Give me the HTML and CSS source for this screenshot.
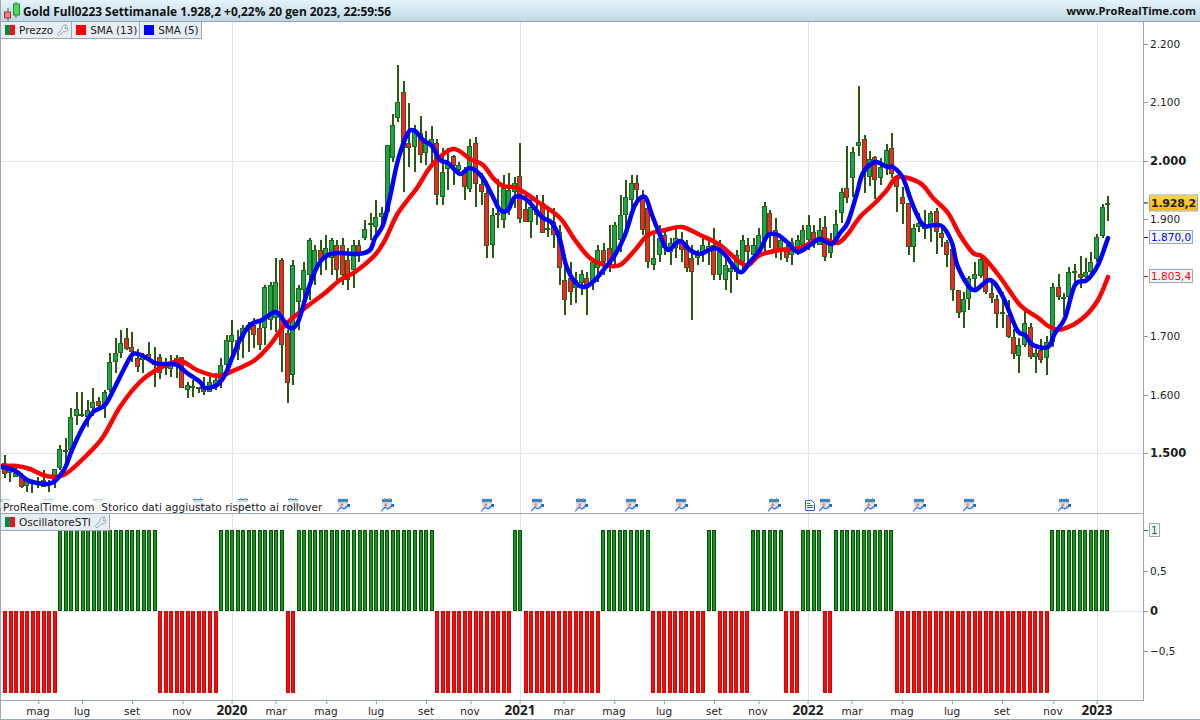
FILE: index.html
```html
<!DOCTYPE html>
<html lang="it">
<head>
  <meta charset="UTF-8" />
  <title>Gold Full0223 Settimanale</title>
  <link rel="stylesheet" href="styles.css">
</head>
<body>
  <svg class="defs" width="0" height="0">
    <symbol id="wrench" viewBox="0 0 16 16">
      <path d="M1.5 12.5 L7.5 7 C6.5 3.5 9.5 0.5 13.5 1.5 L10.8 4.2 L11.8 6.2 L14.2 4.4 C15.2 8 12 10.4 9 9.2 L3.6 14.6 Z" fill="#fff" stroke="#6f93b5" stroke-width="1.1" stroke-linejoin="round"/>
    </symbol>
    <symbol id="cal" viewBox="0 0 13 14">
      <rect x="1" y="2" width="10" height="9" fill="#cdd2d8"/>
      <path d="M3 5v6M5.5 5v6M8 5v6M1 7h10M1 9.5h10" stroke="#f2f3f5" stroke-width="0.8"/>
      <rect x="1" y="1" width="10" height="3" fill="#3f86b4"/>
      <rect x="3" y="0" width="1" height="2" fill="#8c98a4"/>
      <rect x="8" y="0" width="1" height="2" fill="#8c98a4"/>
      <rect x="3.5" y="5.5" width="2.5" height="2.5" fill="#ee7f7f"/>
      <polyline points="0,13.5 4,9 7,11 11,7.5" fill="none" stroke="#2f6fdc" stroke-width="1.1"/>
      <rect x="10.2" y="6" width="2.8" height="2.8" fill="#1c5fd4"/>
    </symbol>
    <symbol id="doc" viewBox="0 0 10 11">
      <path d="M0.5 0.5h6l3 3v7h-9z" fill="#fff" stroke="#2f66d0"/>
      <path d="M2 3.5h3M2 5.5h6M2 7.5h6" stroke="#2f66d0"/>
    </symbol>
  </svg>

  <div class="window">
    <header class="titlebar">
      <svg class="logo" width="18" height="20" viewBox="0 0 18 20">
        <path d="M5 7v13M13 1v16" stroke="#1f7a2a" stroke-width="1"/>
        <rect x="1.5" y="11" width="6" height="6" fill="#f08080" stroke="#a83030"/>
        <rect x="10.5" y="3" width="6" height="11" fill="#4fd860" stroke="#1f8a2a"/>
      </svg>
      <span class="title">Gold Full0223 Settimanale 1.928,2 +0,22% 20 gen 2023, 22:59:56</span>
      <span class="site">www.ProRealTime.com</span>
    </header>

    <section class="row row-price">
      <div class="plot" id="pricePlot">
        <svg class="chart" id="priceChart" viewBox="1 22 1142 491" preserveAspectRatio="none"></svg>
        <div class="legend">
          <div class="tab"><i class="swatch swatch-split"></i>Prezzo<svg class="tool"><use href="#wrench"/></svg></div>
          <div class="tab tab-sma"><i class="swatch swatch-red"></i>SMA (13)</div>
          <div class="tab tab-sma"><i class="swatch swatch-blue"></i>SMA (5)</div>
        </div>
        <div class="note">ProRealTime.com&nbsp; Storico dati aggiustato rispetto ai rollover</div>
      </div>
      <div class="yaxis" id="priceAxis"></div>
    </section>

    <section class="row row-osc">
      <div class="plot" id="oscPlot">
        <svg class="chart" id="oscChart" viewBox="1 514 1142 186" preserveAspectRatio="none"></svg>
        <div class="legend">
          <div class="tab"><i class="swatch swatch-split"></i>OscillatoreSTI<svg class="tool"><use href="#wrench"/></svg></div>
        </div>
      </div>
      <div class="yaxis" id="oscAxis"></div>
    </section>

    <footer class="xaxis" id="timeAxis"></footer>
  </div>

  <script src="script.js"></script>
</body>
</html>
```

FILE: styles.css
```css
* {
  box-sizing: border-box;
}

body {
  margin: 0;
  width: 1200px;
  height: 720px;
  overflow: hidden;
  background: #fff;
  color: #1c1c1c;
  font-family: "DejaVu Sans", sans-serif;
  font-size: 10.5px;
}

.defs {
  position: absolute;
}

.window {
  display: flex;
  flex-direction: column;
  height: 720px;
  border-left: 1px solid #9aa8b2;
}

.titlebar {
  display: flex;
  align-items: center;
  height: 22px;
  padding: 0 4px 0 2px;
  background: linear-gradient(#e6f3f9, #bfd8e5);
  border-bottom: 1px solid #94a4ae;
  font-family: "Open Sans", sans-serif;
  font-size: 11.9px;
  font-weight: bold;
}

.logo {
  margin-right: 2px;
}

.title {
  flex: 1;
  color: #111;
}

.site {
  color: #111;
  font-size: 11.2px;
}

.row {
  display: flex;
}

.row-price {
  height: 492px;
}

.row-osc {
  height: 187px;
}

.plot {
  position: relative;
  width: 1142px;
  border-bottom: 1px solid #9aa8b2;
}

.chart {
  display: block;
  width: 100%;
  height: 100%;
}

.legend {
  position: absolute;
  top: 0;
  left: 0;
  display: flex;
}

.tab {
  display: flex;
  align-items: center;
  height: 17px;
  padding: 0 2px 0 4px;
  background: #e7eef3;
  border-right: 1px solid #9aa8b2;
  border-bottom: 1px solid #9aa8b2;
  white-space: nowrap;
}

.tab-sma {
  letter-spacing: -0.1px;
}

.swatch {
  width: 10px;
  height: 10px;
  margin-right: 4px;
}

.swatch-split {
  background: linear-gradient(90deg, #0b8a3c 50%, #e8141c 50%);
}

.swatch-red {
  background: #f00;
}

.swatch-blue {
  background: #00f;
}

.tool {
  width: 13px;
  height: 13px;
  margin-left: 3px;
}

.note {
  position: absolute;
  left: 2px;
  right: 819px;
  bottom: 0;
  height: 13px;
  line-height: 15px;
  background: rgba(255, 255, 255, 0.72);
  white-space: nowrap;
  letter-spacing: 0.05px;
}

.mark {
  position: absolute;
  top: 476px;
  width: 13px;
  height: 14px;
}

.mark-doc {
  top: 478px;
  width: 10px;
  height: 11px;
}

.mark-faded {
  opacity: 0.35;
}

.yaxis {
  position: relative;
  flex: 1;
  border-left: 1px solid #9aa8b2;
}

.ylabel {
  position: absolute;
  left: 0;
  display: flex;
  align-items: center;
  transform: translateY(-50%);
  white-space: nowrap;
}

.ylabel::before {
  content: "";
  width: 4px;
  height: 1px;
  margin-right: 1px;
  background: #8a98a2;
}

.ylabel-main {
  font-weight: bold;
  font-size: 11.5px;
}

.ylabel span {
  padding: 0 1px;
}

.ylabel-tag span {
  padding: 0 1px;
  border: 1px solid #9aa8b2;
  background: #f1f4f8;
  line-height: 12px;
}

.ylabel-gold {
  font-weight: bold;
  font-size: 11px;
  letter-spacing: -0.25px;
}

.ylabel-gold::before {
  background: #111;
}

.ylabel-gold span {
  background: linear-gradient(#ffd740, #f7b90a);
  line-height: 15px;
}

.ylabel-blue {
  color: #00f;
}

.ylabel-blue::before {
  background: #00f;
}

.ylabel-red {
  color: #f00;
}

.ylabel-red::before {
  background: #f00;
}

.ylabel-green {
  color: #0a7a0a;
}

.ylabel-green::before {
  background: #0a7a0a;
}

.xaxis {
  position: relative;
  height: 19px;
  border-bottom: 1px solid #9aa8b2;
}

.xlabel {
  position: absolute;
  top: 0;
  padding-top: 4px;
  transform: translateX(-50%);
  line-height: 13px;
}

.xlabel::before {
  content: "";
  position: absolute;
  top: 0;
  left: 50%;
  width: 1px;
  height: 3px;
  background: #8a98a2;
}

.xlabel-year {
  padding-top: 3px;
  font-family: "Open Sans", sans-serif;
  font-weight: bold;
  font-size: 13.5px;
}
```

FILE: script.js
```js
// all chart data is in page pixels, the svg viewBox maps them straight
const NS = "http://www.w3.org/2000/svg";
const GREEN = 0, RED = 1;

// x, high, low, body top, body bottom, colour
const candles = [
  [5,455,478,463,474,RED],[10,466,482,467,473,GREEN],[16,468,477,473,477,GREEN],[22,473,488,477,487,RED],
  [27,478,492,480,486,GREEN],[32,480,493,482,484,GREEN],[38,477,488,482,484,GREEN],[44,470,487,480,487,RED],
  [49,480,492,482,485,GREEN],[55,469,488,469,482,GREEN],[60,445,470,449,468,GREEN],[66,438,463,450,452,GREEN],
  [71,408,455,417,450,GREEN],[77,392,425,409,416,GREEN],[82,392,417,414,416,GREEN],[88,400,427,410,417,GREEN],
  [93,388,416,402,408,GREEN],[99,397,410,401,406,RED],[105,390,418,392,406,GREEN],[110,353,392,362,390,GREEN],
  [116,338,373,353,362,GREEN],[121,330,358,343,353,GREEN],[127,328,350,338,349,RED],[132,332,362,347,352,RED],
  [138,349,372,358,367,RED],[143,353,373,357,360,GREEN],[149,342,361,354,358,RED],[155,347,387,363,365,GREEN],
  [160,354,379,357,373,RED],[166,358,375,364,368,GREEN],[171,355,377,363,369,GREEN],[177,355,378,358,366,GREEN],
  [182,357,388,357,388,RED],[188,382,398,385,390,GREEN],[193,380,397,386,388,RED],[199,387,393,387,389,GREEN],
  [204,377,395,387,392,RED],[210,377,392,382,392,GREEN],[216,373,390,380,385,GREEN],[221,358,388,365,382,GREEN],
  [227,335,375,340,365,GREEN],[232,320,360,335,342,GREEN],[238,330,360,340,350,RED],[243,325,358,328,338,GREEN],
  [249,322,352,325,330,GREEN],[254,318,348,325,335,RED],[260,322,350,328,345,RED],[265,285,345,287,328,GREEN],
  [271,282,330,285,320,GREEN],[276,258,332,282,318,GREEN],[282,258,372,260,345,RED],[288,330,403,333,383,RED],
  [293,260,385,265,375,GREEN],[299,285,330,288,302,GREEN],[304,262,310,270,290,GREEN],[310,238,300,240,275,GREEN],
  [315,245,285,250,272,GREEN],[321,240,275,250,260,RED],[326,235,270,248,258,GREEN],[332,238,275,240,258,GREEN],
  [337,240,280,245,270,RED],[343,238,285,245,275,RED],[348,248,290,260,280,RED],[354,240,288,245,270,GREEN],
  [359,240,262,245,255,RED],[365,220,240,229,238,GREEN],[371,213,240,223,225,GREEN],[376,200,237,217,227,GREEN],
  [382,207,227,213,217,GREEN],[388,145,212,145,212,GREEN],[393,114,162,125,158,GREEN],[398,65,122,102,118,GREEN],
  [404,81,192,92,148,RED],[409,103,167,143,148,RED],[415,125,172,130,147,GREEN],[421,116,163,133,155,RED],
  [426,131,165,143,153,GREEN],[432,126,167,139,145,GREEN],[437,139,205,143,195,RED],[443,148,205,172,197,GREEN],
  [448,148,190,163,169,GREEN],[454,155,185,156,166,RED],[459,162,175,165,170,GREEN],[465,167,200,170,187,RED],
  [470,139,192,146,189,GREEN],[476,137,207,143,184,RED],[482,173,205,184,192,RED],[487,183,258,193,246,RED],
  [493,208,258,215,245,GREEN],[498,179,228,213,215,GREEN],[504,175,228,188,220,GREEN],[509,173,215,190,210,GREEN],
  [515,177,208,183,192,GREEN],[520,143,223,176,219,RED],[526,195,222,209,222,RED],[531,197,238,207,222,GREEN],
  [537,195,225,210,215,GREEN],[543,195,233,203,233,RED],[548,207,237,228,230,GREEN],[554,208,248,222,235,RED],
  [560,225,285,232,268,RED],[565,255,315,280,300,RED],[571,262,305,278,292,RED],[576,272,303,280,288,GREEN],
  [582,270,295,274,283,GREEN],[587,272,315,278,288,RED],[593,258,290,262,282,GREEN],[598,245,282,250,268,GREEN],
  [604,243,275,250,262,RED],[610,225,272,248,265,RED],[615,222,265,225,255,GREEN],[621,195,252,215,240,GREEN],
  [626,180,235,197,215,GREEN],[632,175,215,183,200,GREEN],[637,175,205,183,190,RED],[643,190,235,198,230,RED],
  [648,205,268,208,262,RED],[654,235,270,258,265,GREEN],[660,225,262,238,255,GREEN],[665,228,255,235,248,RED],
  [671,238,265,243,252,GREEN],[676,228,258,238,248,GREEN],[682,232,262,240,250,RED],[687,240,272,245,268,RED],
  [692,245,320,258,272,RED],[698,250,265,252,258,GREEN],[703,235,262,245,255,GREEN],[709,240,265,246,250,GREEN],
  [714,228,280,245,275,RED],[720,240,280,250,275,GREEN],[726,258,290,265,280,GREEN],[731,262,293,268,272,GREEN],
  [737,250,280,255,272,GREEN],[743,235,272,240,262,GREEN],[748,238,268,245,252,RED],[754,238,262,245,255,GREEN],
  [759,228,258,235,252,GREEN],[765,202,255,206,240,GREEN],[770,210,248,213,235,RED],[776,218,258,230,252,RED],
  [781,235,260,240,252,GREEN],[787,240,262,248,258,RED],[792,238,265,242,255,GREEN],[798,235,255,240,250,GREEN],
  [803,225,250,230,245,GREEN],[809,215,250,225,240,GREEN],[814,225,248,232,240,RED],[820,218,245,230,245,GREEN],
  [825,216,261,227,257,RED],[831,233,258,243,253,GREEN],[836,210,245,224,245,GREEN],[842,188,223,192,213,GREEN],
  [847,146,203,188,198,RED],[853,147,197,152,178,GREEN],[859,86,156,142,146,GREEN],[865,135,193,139,170,RED],
  [870,151,186,159,177,GREEN],[875,156,199,157,180,RED],[881,158,185,167,178,GREEN],[887,144,175,150,165,GREEN],
  [892,133,178,148,174,RED],[897,175,212,176,187,RED],[903,187,224,197,204,RED],[909,203,255,203,247,RED],
  [914,224,262,228,247,GREEN],[919,213,232,223,227,GREEN],[925,210,239,225,229,GREEN],[931,211,242,213,227,GREEN],
  [937,208,254,211,232,RED],[942,228,247,233,238,RED],[947,240,267,242,255,RED],[953,248,301,249,290,RED],
  [959,290,318,290,313,RED],[964,292,328,299,312,GREEN],[969,276,310,278,299,GREEN],[975,262,288,274,279,GREEN],
  [981,257,278,259,276,GREEN],[986,258,294,259,292,RED],[992,282,303,293,298,RED],[997,295,328,299,314,RED],
  [1003,292,328,312,314,GREEN],[1009,300,338,315,337,RED],[1014,329,359,337,354,RED],[1019,338,373,345,356,GREEN],
  [1025,309,347,323,345,GREEN],[1031,323,359,327,357,RED],[1036,349,373,353,357,GREEN],[1041,339,363,350,360,RED],
  [1047,336,375,342,358,GREEN],[1053,283,347,287,342,GREEN],[1059,274,300,287,297,RED],[1064,293,315,297,298,GREEN],
  [1069,267,305,272,297,GREEN],[1075,264,287,271,273,GREEN],[1081,256,288,274,278,RED],[1086,258,283,272,277,GREEN],
  [1091,252,277,262,272,GREEN],[1097,234,262,237,259,GREEN],[1103,204,238,207,236,GREEN],[1108,196,221,203,205,GREEN]
];

const sma13 = [
  [2,466],[17,466],[30,469],[43,475],[55,477],[67,473],[87,455],[103,437],[120,407],[140,382],[160,368],[180,361],
  [197,370],[217,376],[235,370],[255,360],[270,345],[285,325],[305,308],[325,293],[340,280],[355,272],[375,255],
  [385,240],[398,213],[417,188],[432,165],[453,149],[470,159],[483,165],[493,178],[503,186],[517,188],[538,202],
  [560,218],[575,240],[590,258],[605,265],[620,265],[635,250],[648,235],[665,230],[682,227],[700,235],[720,245],
  [745,265],[760,255],[780,250],[800,248],[820,239],[837,243],[847,235],[860,217],[875,203],[887,190],[898,177],
  [920,183],[933,198],[948,213],[960,235],[973,253],[983,257],[1000,277],[1020,305],[1037,317],[1050,327],
  [1063,329],[1083,318],[1098,300],[1108,277]
];

const sma5 = [
  [2,467],[10,469],[17,472],[27,480],[37,483],[47,484],[55,481],[65,468],[72,450],[83,427],[93,412],[105,405],
  [115,387],[125,367],[133,354],[143,356],[155,363],[163,364],[177,365],[187,373],[200,382],[205,388],[217,385],
  [225,375],[232,358],[240,340],[250,325],[262,320],[275,312],[282,318],[290,328],[298,322],[308,290],[318,265],
  [328,255],[340,253],[358,254],[370,250],[375,238],[383,225],[390,197],[398,160],[408,133],[415,131],[423,140],
  [432,146],[440,160],[448,163],[460,174],[470,168],[482,177],[493,197],[500,210],[508,210],[515,197],[527,200],
  [542,217],[552,223],[560,240],[566,265],[575,282],[585,287],[595,280],[605,268],[615,255],[625,235],[635,205],
  [645,197],[652,215],[660,235],[668,250],[680,241],[690,250],[700,254],[715,248],[725,255],[735,268],[742,272],
  [750,262],[760,250],[768,235],[778,235],[788,243],[798,252],[810,245],[820,239],[832,244],[840,233],[848,222],
  [857,193],[863,173],[875,162],[887,167],[893,167],[903,178],[912,203],[923,225],[935,225],[943,227],[952,243],
  [958,267],[973,290],[990,280],[1003,297],[1017,330],[1025,335],[1033,345],[1048,347],[1055,333],[1065,318],
  [1075,285],[1087,280],[1098,265],[1108,238]
];

// oscillator: runs of red / green weekly bars, starting with red
const oscRuns = [10,18,11,12,2,25,14,2,14,9,10,2,6,6,3,4,2,11,28,11];

function el(parent, tag, attrs) {
  const node = document.createElementNS(NS, tag);
  for (const key in attrs) node.setAttribute(key, attrs[key]);
  parent.appendChild(node);
  return node;
}

function gridLines(svg, xs, ys, top, bottom) {
  xs.forEach(x => el(svg, "rect", { x: x, y: top, width: 1, height: bottom - top, fill: "#e3e3ea" }));
  ys.forEach(y => el(svg, "rect", { x: 1, y: y, width: 1142, height: 1, fill: "#e4e4ea" }));
}

function drawCandles(svg) {
  candles.forEach(([x, hi, lo, top, bottom, colour]) => {
    el(svg, "rect", { x: x - 1, y: hi, width: 2, height: lo - hi, fill: "#2a5812" });
    el(svg, "rect", {
      x: x - 2.5, y: top + 0.5, width: 4, height: Math.max(bottom - top - 1, 1),
      fill: colour === RED ? "#ff2024" : "#18a84a", stroke: "#2a5f1a", "stroke-width": 1
    });
  });
}

// catmull-rom curve, so the line still goes through every read point
function drawLine(svg, points, colour) {
  let d = "M" + points[0].join(" ");
  for (let i = 0; i < points.length - 1; i++) {
    const p0 = points[Math.max(i - 1, 0)];
    const p1 = points[i];
    const p2 = points[i + 1];
    const p3 = points[Math.min(i + 2, points.length - 1)];
    const c1 = [p1[0] + (p2[0] - p0[0]) / 6, p1[1] + (p2[1] - p0[1]) / 6];
    const c2 = [p2[0] - (p3[0] - p1[0]) / 6, p2[1] - (p3[1] - p1[1]) / 6];
    d += " C" + c1.join(" ") + " " + c2.join(" ") + " " + p2.join(" ");
  }
  el(svg, "path", {
    d: d, fill: "none", stroke: colour, "stroke-width": 4.5,
    "stroke-linejoin": "round", "stroke-linecap": "round"
  });
}

function drawOsc(svg) {
  let i = 0;
  oscRuns.forEach((count, run) => {
    const isGreen = run % 2 === 1;
    for (let n = 0; n < count; n++, i++) {
      const x = Math.round(5 + 5.54 * i);
      el(svg, "rect", {
        x: x - 1.5, y: isGreen ? 530.5 : 611.5, width: 3, height: isGreen ? 80 : 81,
        fill: isGreen ? "#109a14" : "#ff0808", stroke: isGreen ? "#0b4d0b" : "#cc0808", "stroke-width": 1
      });
    }
  });
}

function addMarks() {
  const plot = document.getElementById("pricePlot");
  const xs = [5, 48, 98, 198, 243, 293, 343, 387, 487, 537, 581, 631, 681, 774, 825, 870, 919, 969, 1064];
  xs.forEach((x, i) => {
    const svg = el(plot, "svg", { class: "mark" + (i < 3 ? " mark-faded" : ""), style: "left:" + (x - 7) + "px" });
    el(svg, "use", { href: "#cal" });
  });
  const doc = el(plot, "svg", { class: "mark mark-doc", style: "left:804px" });
  el(doc, "use", { href: "#doc" });
  // keep the note text above the marks
  plot.appendChild(plot.querySelector(".note"));
}

function addYLabels(id, top, labels) {
  const axis = document.getElementById(id);
  labels.forEach(([y, text, cls]) => {
    const label = document.createElement("div");
    label.className = "ylabel " + (cls || "");
    label.style.top = (y - top) + "px";
    const span = document.createElement("span");
    span.textContent = text;
    label.appendChild(span);
    axis.appendChild(label);
  });
}

function addXLabels() {
  const axis = document.getElementById("timeAxis");
  const labels = [
    [38,"mag"],[82,"lug"],[132,"set"],[182,"nov"],[232,"2020",1],[276,"mar"],[326,"mag"],[376,"lug"],
    [426,"set"],[470,"nov"],[520,"2021",1],[564,"mar"],[614,"mag"],[664,"lug"],[714,"set"],[758,"nov"],
    [808,"2022",1],[852,"mar"],[902,"mag"],[952,"lug"],[1002,"set"],[1053,"nov"],[1097,"2023",1]
  ];
  labels.forEach(([x, text, year]) => {
    const label = document.createElement("span");
    label.className = year ? "xlabel xlabel-year" : "xlabel";
    label.style.left = (x - 1) + "px";
    label.textContent = text;
    axis.appendChild(label);
  });
}

const priceChart = document.getElementById("priceChart");
gridLines(priceChart, [232, 520, 808, 1097], [161, 453], 22, 513);
drawCandles(priceChart);
drawLine(priceChart, sma13, "#ff0000");
drawLine(priceChart, sma5, "#0000ff");

const oscChart = document.getElementById("oscChart");
gridLines(oscChart, [232, 520, 808, 1097], [611], 514, 700);
drawOsc(oscChart);

addMarks();
addXLabels();
addYLabels("priceAxis", 22, [
  [44, "2.200"], [102, "2.100"], [161, "2.000", "ylabel-main"], [219, "1.900"],
  [203, "1.928,2", "ylabel-tag ylabel-gold"], [237, "1.870,0", "ylabel-tag ylabel-blue"],
  [276, "1.803,4", "ylabel-tag ylabel-red"], [336, "1.700"], [395, "1.600"], [453, "1.500", "ylabel-main"]
]);
addYLabels("oscAxis", 514, [
  [530, "1", "ylabel-tag ylabel-green"], [571, "0,5"], [611, "0", "ylabel-main"], [651, "−0,5"]
]);
```
